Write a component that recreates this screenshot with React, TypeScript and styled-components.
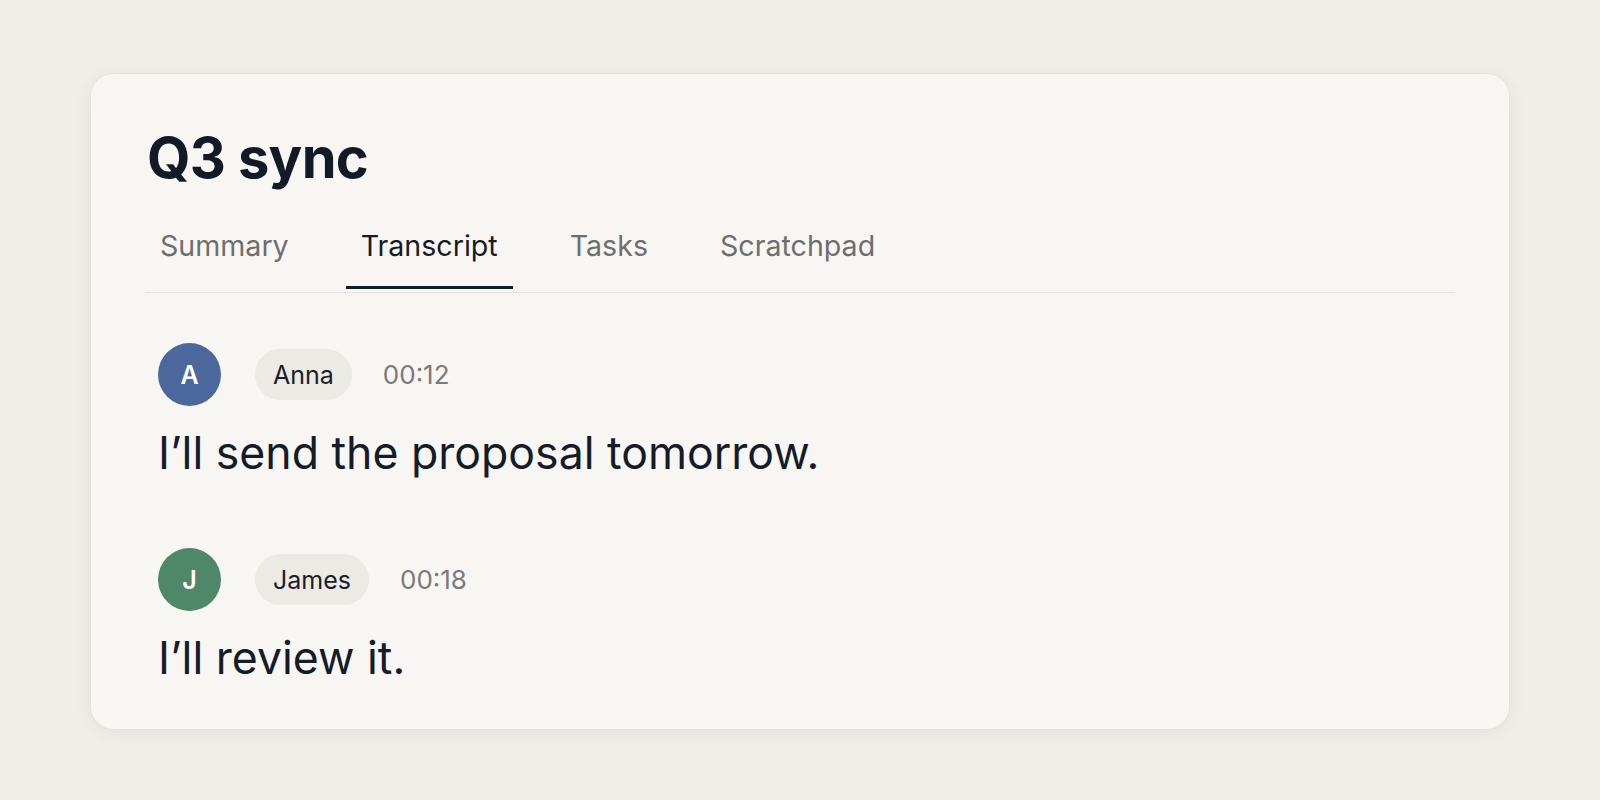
import styled, { createGlobalStyle } from 'styled-components';

const GlobalStyle = createGlobalStyle`
  html, body {
    margin: 0;
    padding: 0;
    background: #efeee9;
  }
  body {
    font-family: Inter, "Noto Sans", "Liberation Sans", sans-serif;
    color: #141b27;
  }
  * {
    box-sizing: border-box;
  }
`;

const Page = styled.main`
  min-height: 100vh;
  display: flex;
  align-items: center;
  justify-content: center;
  padding: 3px 91px 0;
`;

const Card = styled.section`
  width: 100%;
  background: #f7f6f2;
  border-radius: 22px;
  box-shadow: 0 3px 18px rgba(60, 50, 30, 0.07), 0 0 0 1px rgba(60, 50, 30, 0.03);
  padding: 51px 54px 41px;
`;

const Title = styled.h1`
  margin: 0 0 0 2px;
  font-size: 56px;
  line-height: 1.2;
  font-weight: 700;
  letter-spacing: -0.012em;
  color: #121a26;
`;

const TabBar = styled.nav`
  display: flex;
  gap: 42px;
  margin-top: 37px;
  padding-bottom: 3px;
  border-bottom: 1.5px solid #e3e2dd;
`;

const Tab = styled.button<{ $active?: boolean }>`
  appearance: none;
  background: none;
  border: none;
  border-bottom: 3.5px solid ${(p) => (p.$active ? '#131a26' : 'transparent')};
  padding: 0 15px 23px;
  margin: 0;
  font-family: inherit;
  font-size: 28.6px;
  line-height: 1.2;
  font-weight: 400;
  color: ${(p) => (p.$active ? '#151b26' : '#6e6e6e')};
  cursor: pointer;
`;

const Transcript = styled.div`
  display: flex;
  flex-direction: column;
  gap: 65px;
  padding: 50px 13px 0;
`;

const Entry = styled.article`
  display: flex;
  flex-direction: column;
  gap: 19px;
`;

const EntryHeader = styled.div`
  display: flex;
  align-items: center;
`;

const Avatar = styled.div<{ $color: string }>`
  width: 63px;
  height: 63px;
  border-radius: 50%;
  background: ${(p) => p.$color};
  color: #ffffff;
  display: flex;
  align-items: center;
  justify-content: center;
  font-size: 25px;
  font-weight: 600;
  flex-shrink: 0;
`;

const NamePill = styled.span`
  margin-left: 34px;
  height: 51px;
  padding: 0 18px;
  border-radius: 26px;
  background: #ebeae5;
  display: inline-flex;
  align-items: center;
  font-size: 25px;
  color: #1a1f2a;
`;

const Time = styled.span`
  margin-left: 31px;
  font-size: 26px;
  color: #7a7a7a;
`;

const Message = styled.p`
  margin: 0;
  font-size: 44.6px;
  line-height: 1.3;
  font-weight: 400;
  color: #141b29;
`;

const tabs = ['Summary', 'Transcript', 'Tasks', 'Scratchpad'];

const entries = [
  { initial: 'A', name: 'Anna', time: '00:12', color: '#4b679b', text: 'I’ll send the proposal tomorrow.' },
  { initial: 'J', name: 'James', time: '00:18', color: '#4f876a', text: 'I’ll review it.' },
];

export default function App() {
  return (
    <>
      <GlobalStyle />
      <Page>
        <Card>
          <Title>Q3 sync</Title>
          <TabBar>
            {tabs.map((t) => (
              <Tab key={t} $active={t === 'Transcript'}>
                {t}
              </Tab>
            ))}
          </TabBar>
          <Transcript>
            {entries.map((e) => (
              <Entry key={e.name}>
                <EntryHeader>
                  <Avatar $color={e.color}>{e.initial}</Avatar>
                  <NamePill>{e.name}</NamePill>
                  <Time>{e.time}</Time>
                </EntryHeader>
                <Message>{e.text}</Message>
              </Entry>
            ))}
          </Transcript>
        </Card>
      </Page>
    </>
  );
}
